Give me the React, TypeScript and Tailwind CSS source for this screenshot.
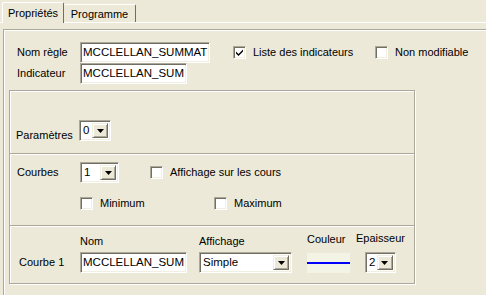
import React from 'react'

// couleurs "classiques" XP
const sunken =
  'border border-t-[#aca899] border-l-[#aca899] border-b-white border-r-white shadow-[inset_1px_1px_0_#716f64,inset_-1px_-1px_0_#f1efe2]'
const raised =
  'border border-t-[#f1efe2] border-l-[#f1efe2] border-b-[#716f64] border-r-[#716f64] shadow-[inset_1px_1px_0_#fff,inset_-1px_-1px_0_#aca899]'
const etched = 'border border-[#aca899] shadow-[inset_1px_1px_0_#fff,1px_1px_0_#fff]'

function TextBox({ value, w }: { value: string; w: string }) {
  return (
    <div className={`${sunken} ${w} h-[21px] bg-white flex items-center pl-[2px] overflow-hidden whitespace-nowrap text-[11.5px]`}>
      {value}
    </div>
  )
}

function Combo({ value, w }: { value: string; w: string }) {
  return (
    <div className={`${sunken} ${w} h-[21px] bg-white flex items-stretch p-[2px] text-[11.5px]`}>
      <div className="flex-1 flex items-center pl-[1px] overflow-hidden whitespace-nowrap">{value}</div>
      <div className={`${raised} w-[16px] bg-[#ece9d8] flex items-center justify-center`}>
        <svg width="7" height="4" viewBox="0 0 7 4">
          <path d="M0 0h7L3.5 4z" fill="#000" />
        </svg>
      </div>
    </div>
  )
}

function Check({ checked, label }: { checked?: boolean; label: string }) {
  return (
    <div className="flex items-center">
      <div className={`${sunken} w-[13px] h-[13px] bg-white flex items-center justify-center`}>
        {checked && (
          <svg width="7" height="7" viewBox="0 0 7 7">
            <path d="M0 2.5l2.5 2.5L7 0.5v2L2.5 7 0 4.5z" fill="#000" />
          </svg>
        )}
      </div>
      <span className="ml-[7px]">{label}</span>
    </div>
  )
}

function Separator() {
  return <div className="h-[2px] border-t border-[#aca899] border-b border-b-white" />
}

export default function App() {
  return (
    <div className="w-[486px] h-[295px] overflow-hidden bg-[#ece9d8] text-[11px] leading-none text-black font-['Liberation_Sans',Arial,sans-serif]">
      {/* onglets */}
      <div className="flex items-end h-[22px] pl-[2px]">
        <div className="relative z-10 h-[21px] mb-[-1px] w-[62px] bg-[#ece9d8] border-t border-l border-white border-r border-r-[#716f64] rounded-t-[2px] flex items-start justify-center pt-[5px]">
          Propriétés
        </div>
        <div className="h-[18px] w-[72px] border-t border-white border-r border-r-[#716f64] rounded-t-[2px] flex items-start justify-center pt-[4px]">
          Programme
        </div>
      </div>

      <div className="border-t border-white h-[273px] pl-[3px] pt-[6px]">
        {/* cadre principal */}
        <div className={`${etched} w-[500px] h-[300px] pt-[12px]`}>
          <div className="flex items-center h-[21px] pl-[13px]">
            <span className="w-[63px]">Nom règle</span>
            <TextBox value="MCCLELLAN_SUMMAT" w="w-[130px]" />
            <div className="ml-[23px] w-[142px]">
              <Check checked label="Liste des indicateurs" />
            </div>
            <Check label="Non modifiable" />
          </div>
          <div className="flex items-center h-[21px] mt-[0px] pl-[13px]">
            <span className="w-[63px]">Indicateur</span>
            <TextBox value="MCCLELLAN_SUM" w="w-[107px]" />
          </div>

          {/* cadre interne */}
          <div className={`${etched} ml-[5px] mt-[6px] w-[406px] h-[194px] flex flex-col`}>
            <div className="h-[62px] flex items-end pb-[12px] pl-[6px]">
              <span className="w-[63px]">Paramètres</span>
              <Combo value="0" w="w-[32px]" />
            </div>
            <Separator />
            <div className="h-[70px] pt-[7px] pl-[7px]">
              <div className="flex items-center h-[21px]">
                <span className="w-[63px]">Courbes</span>
                <Combo value="1" w="w-[39px]" />
                <div className="ml-[31px]">
                  <Check label="Affichage sur les cours" />
                </div>
              </div>
              <div className="flex items-center mt-[14px] pl-[63px]">
                <div className="w-[134px]">
                  <Check label="Minimum" />
                </div>
                <Check label="Maximum" />
              </div>
            </div>
            <Separator />
            <div className="flex-1 pl-[9px] flex items-end pb-[10px]">
              <span className="w-[61px] h-[21px] flex items-center">Courbe 1</span>
              <div className="flex flex-col">
                <span className="mb-[5px]">Nom</span>
                <TextBox value="MCCLELLAN_SUM" w="w-[107px]" />
              </div>
              <div className="flex flex-col ml-[12px]">
                <span className="mb-[5px]">Affichage</span>
                <Combo value="Simple" w="w-[93px]" />
              </div>
              <div className="flex flex-col ml-[15px]">
                <span className="mb-[8px]">Couleur</span>
                <div className="w-[43px] h-[20px] bg-[#f4f4e6] flex items-center">
                  <div className="w-full h-[2px] bg-[#0000ff]" />
                </div>
              </div>
              <div className="flex flex-col items-center ml-[6px]">
                <span className="mb-[8px]">Epaisseur</span>
                <Combo value="2" w="w-[31px]" />
              </div>
            </div>
          </div>
        </div>
      </div>
    </div>
  )
}
